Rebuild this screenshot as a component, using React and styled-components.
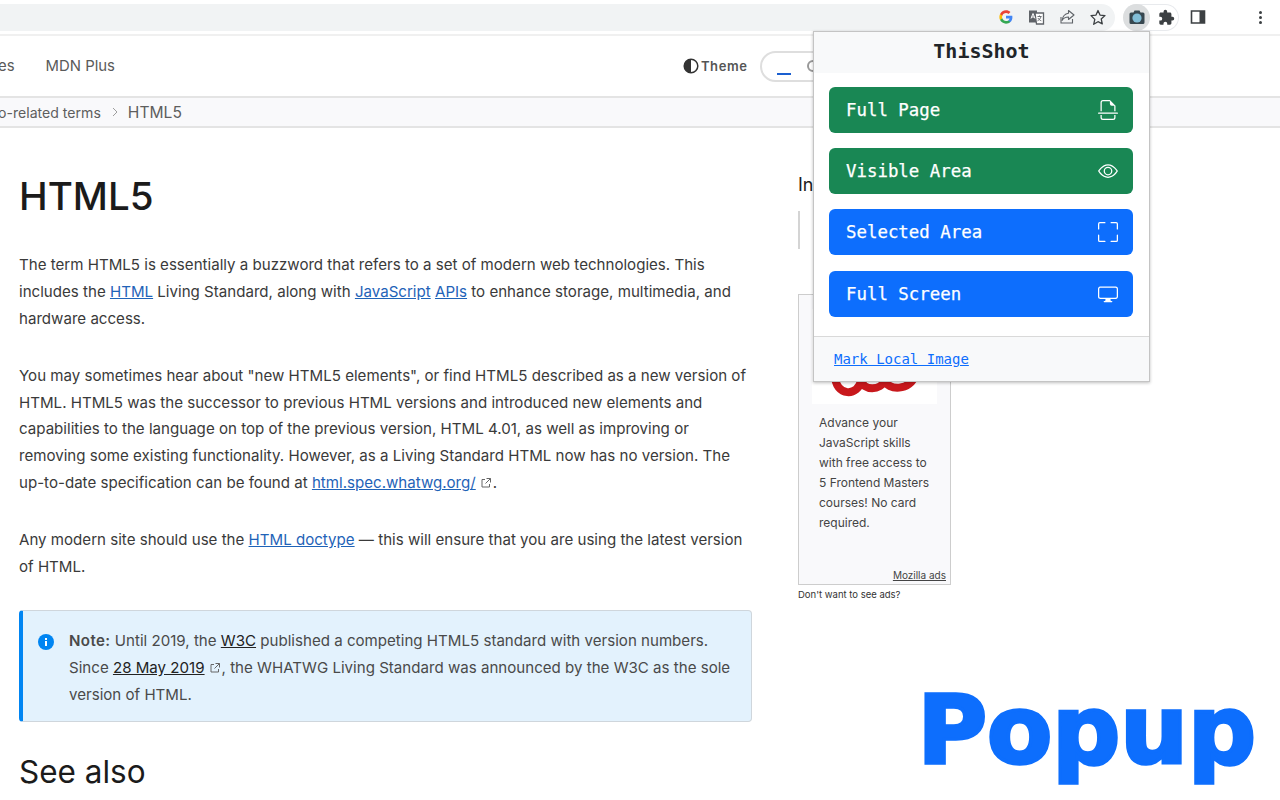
import React from 'react';
import styled, { createGlobalStyle } from 'styled-components';
import { BsFileEarmarkBreak, BsEye, BsFullscreen, BsDisplay } from 'react-icons/bs';

const GlobalStyle = createGlobalStyle`
   html, body {
      margin: 0;
      padding: 0;
      background: #fff;
   }
   * {
      box-sizing: border-box;
   }
`;

const ExternalIcon = () => (
   <ExternalSvg viewBox='0 0 12 12'>
      <path d='M5 2.5H2v7.5h7.5V7' fill='none' stroke='currentColor' strokeWidth='1' />
      <path d='M6.5 1.5h4v4M10.5 1.5L5.5 6.5' fill='none' stroke='currentColor' strokeWidth='1' />
   </ExternalSvg>
);

const App = () => {
   return (
      <Page>
         <GlobalStyle />
         <Chrome>
            <Omnibox>
               <ToolIcon viewBox='0 0 24 24' width='16' height='16'>
                  <path d='M21.6 12.2c0-.7-.1-1.4-.2-2H12v3.9h5.4c-.2 1.2-.9 2.3-2 3v2.5h3.2c1.9-1.7 3-4.3 3-7.4z' fill='#4285f4' />
                  <path d='M12 22c2.7 0 5-.9 6.6-2.4l-3.2-2.5c-.9.6-2 1-3.4 1-2.6 0-4.8-1.8-5.6-4.1H3.1v2.6C4.7 19.8 8.1 22 12 22z' fill='#34a853' />
                  <path d='M6.4 14c-.2-.6-.3-1.3-.3-2s.1-1.4.3-2V7.400H3.100C2.400 8.700 2 10.300 2 12s.4 3.300 1.100 4.600L6.400 14z' fill='#fbbc05' />
                  <path d='M12 6c1.500 0 2.800.5 3.800 1.500l2.900-2.900C17 3 14.700 2 12 2 8.100 2 4.700 4.200 3.100 7.400L6.400 10c.8-2.300 3-4 5.600-4z' fill='#ea4335' />
               </ToolIcon>
               <ToolIcon viewBox='0 0 18 18' width='18' height='18'>
                  <path d='M2 2.500h8v12H2z' fill='#5f6368' />
                  <path d='M8 5h8.500v11H9.500z' fill='#fff' stroke='#5f6368' strokeWidth='1.300' />
                  <path d='M4 10.500l2-5 2 5M4.700 9h2.600' fill='none' stroke='#fff' strokeWidth='1' />
                  <path d='M10.500 8.500h4M12.500 7.500v1M14 8.500c-.5 2-1.800 3.500-3.500 4.300M11 10c.6 1.200 1.800 2.300 3.300 2.800' fill='none' stroke='#5f6368' strokeWidth='.9' />
               </ToolIcon>
               <ToolIcon viewBox='0 0 18 18' width='18' height='18'>
                  <path d='M3 9v6h11.500v-4' fill='none' stroke='#5f6368' strokeWidth='1.100' />
                  <path d='M10.500 2.500l5.500 4.500-5.500 4.500V9C7.500 9 5.500 10 4 12.500 4.500 9 6.500 5.800 10.500 5.200z' fill='none' stroke='#5f6368' strokeWidth='1.100' strokeLinejoin='round' />
               </ToolIcon>
               <ToolIcon viewBox='0 0 18 18' width='18' height='18'>
                  <path d='M9 2.500l2 4.600 5 .5-3.800 3.300 1.100 4.900L9 13.700l-4.300 2.600 1.100-4.900L2 7.600l5-.5z' fill='none' stroke='#3c4043' strokeWidth='1.300' strokeLinejoin='round' />
               </ToolIcon>
            </Omnibox>
            <ExtensionPill>
               <CameraButton>
                  <svg viewBox='0 0 18 18' width='18' height='18'>
                     <path d='M6.500 2.500h5l1 2H15a1.500 1.500 0 0 1 1.500 1.500v8.500A1.500 1.500 0 0 1 15 16H3a1.500 1.500 0 0 1-1.500-1.500V6A1.500 1.500 0 0 1 3 4.500h2.500z' fill='#37474f' />
                     <circle cx='9' cy='10' r='4.600' fill='#81bdd6' />
                  </svg>
               </CameraButton>
               <ToolIcon viewBox='0 0 18 18' width='17' height='17'>
                  <path d='M15.300 8.300h-1.100V5.300c0-.8-.7-1.500-1.500-1.500h-3V2.700a1.900 1.900 0 0 0-3.800 0v1.100h-3c-.8 0-1.500.7-1.500 1.500v2.900h1.100a2 2 0 0 1 0 4H1.400v2.900c0 .8.7 1.500 1.500 1.500h2.900v-1.100a2 2 0 0 1 4 0v1.100h2.900c.8 0 1.500-.7 1.500-1.500v-3h1.100a1.900 1.900 0 0 0 0-3.800z' fill='#3c4043' />
               </ToolIcon>
            </ExtensionPill>
            <SideIcon viewBox='0 0 18 18' width='18' height='18'>
               <path d='M2.500 3h13v12h-13z' fill='none' stroke='#3c4043' strokeWidth='1.600' />
               <path d='M10.500 3h5v12h-5z' fill='#3c4043' />
            </SideIcon>
            <MenuDots>
               <i />
               <i />
               <i />
            </MenuDots>
         </Chrome>

         <Nav>
            <NavLink>es</NavLink>
            <NavLink>MDN Plus</NavLink>
            <ThemeButton>
               <svg viewBox='0 0 16 16' width='16' height='16'>
                  <circle cx='8' cy='8' r='6.800' fill='#fff' stroke='#333' strokeWidth='1.500' />
                  <path d='M8 1.200a6.800 6.800 0 0 0 0 13.600z' fill='#333' />
               </svg>
               Theme
            </ThemeButton>
            <SearchPill>
               <SearchCaret />
               <SearchGlass />
            </SearchPill>
         </Nav>

         <Breadcrumbs>
            <Crumb $size='14.1px'>o-related terms</Crumb>
            <CrumbArrow viewBox='0 0 8 10' width='8' height='10'>
               <path d='M2 1l4 4-4 4' fill='none' stroke='#9e9e9e' strokeWidth='1' />
            </CrumbArrow>
            <Crumb $size='15.6px'>HTML5</Crumb>
         </Breadcrumbs>

         <Main>
            <Article>
               <Title>HTML5</Title>
               <Paragraph>
                  The term HTML5 is essentially a buzzword that refers to a set of modern web technologies. This includes the <TextLink>HTML</TextLink> Living Standard, along with <TextLink>JavaScript</TextLink> <TextLink>APIs</TextLink> to enhance storage, multimedia, and hardware access.
               </Paragraph>
               <Paragraph>
                  You may sometimes hear about "new HTML5 elements", or find HTML5 described as a new version of HTML. HTML5 was the successor to previous HTML versions and introduced new elements and capabilities to the language on top of the previous version, HTML 4.01, as well as improving or removing some existing functionality. However, as a Living Standard HTML now has no version. The up-to-date specification can be found at <TextLink>html.spec.whatwg.org/</TextLink><ExternalIcon />.
               </Paragraph>
               <Paragraph>
                  Any modern site should use the <TextLink>HTML doctype</TextLink> — this will ensure that you are using the latest version of HTML.
               </Paragraph>
               <Note>
                  <NoteIcon viewBox='0 0 16 16' width='16' height='16'>
                     <circle cx='8' cy='8' r='8' fill='#0085f2' />
                     <rect x='7' y='7' width='2' height='5' fill='#fff' />
                     <rect x='7' y='4' width='2' height='2' fill='#fff' />
                  </NoteIcon>
                  <NoteText>
                     <strong>Note:</strong> Until 2019, the <NoteLink>W3C</NoteLink> published a competing HTML5 standard with version numbers. Since <NoteLink>28 May 2019</NoteLink><ExternalIcon />, the WHATWG Living Standard was announced by the W3C as the sole version of HTML.
                  </NoteText>
               </Note>
               <Subtitle>See also</Subtitle>
            </Article>

            <Sidebar>
               <TocHeading>In</TocHeading>
               <TocRail />
               <AdBox>
                  <AdImage>
                     <svg viewBox='0 0 90 22' width='90' height='22'>
                        <path d='M5 0c0 22 24 22 26 5c2 11 20 11 24 0c2 11 26 11 30-5' fill='none' stroke='#c8181c' strokeWidth='8' />
                     </svg>
                  </AdImage>
                  <AdText>Advance your JavaScript skills with free access to 5 Frontend Masters courses! No card required.</AdText>
                  <AdCredit>Mozilla ads</AdCredit>
               </AdBox>
               <AdNote>Don't want to see ads?</AdNote>
            </Sidebar>
         </Main>

         <Popup>
            <PopupHeader>ThisShot</PopupHeader>
            <PopupBody>
               <ShotButton $color='#198754'>
                  Full Page
                  <BsFileEarmarkBreak size={20} />
               </ShotButton>
               <ShotButton $color='#198754'>
                  Visible Area
                  <BsEye size={20} />
               </ShotButton>
               <ShotButton $color='#0d6efd'>
                  Selected Area
                  <BsFullscreen size={20} />
               </ShotButton>
               <ShotButton $color='#0d6efd'>
                  Full Screen
                  <BsDisplay size={20} />
               </ShotButton>
            </PopupBody>
            <PopupFooter>
               <FooterLink>Mark Local Image</FooterLink>
            </PopupFooter>
         </Popup>

         <Caption>Popup</Caption>
      </Page>
   );
};

export default App;


const Page = styled.div`
   position: relative;
   width: 1280px;
   height: 800px;
   overflow: hidden;
   background: #fff;
   font-family: Inter, 'Liberation Sans', sans-serif;
   color: #333;
`;

const Chrome = styled.div`
   display: flex;
   align-items: center;
   height: 36px;
   padding-top: 4px;
   padding-bottom: 4px;
   border-bottom: 2px solid #f0f0f0;
`;

const Omnibox = styled.div`
   display: flex;
   align-items: center;
   justify-content: flex-end;
   gap: 13px;
   width: 1115px;
   height: 27px;
   padding-right: 8px;
   background: #f1f3f4;
   border-radius: 0 14px 14px 0;
`;

const ToolIcon = styled.svg`
   display: block;
   flex: none;
`;

const ExtensionPill = styled.div`
   display: flex;
   align-items: center;
   gap: 8px;
   width: 56px;
   height: 27px;
   margin-left: 8px;
   border: 1px solid #e8eaed;
   border-left: none;
   border-radius: 14px;
`;

const CameraButton = styled.div`
   display: flex;
   align-items: center;
   justify-content: center;
   width: 27px;
   height: 27px;
   border-radius: 50%;
   background: #dcdedf;
`;

const SideIcon = styled.svg`
   display: block;
   flex: none;
   margin-left: 10px;
`;

const MenuDots = styled.div`
   display: flex;
   flex-direction: column;
   gap: 2px;
   margin-left: 52px;

   i {
      display: block;
      width: 3px;
      height: 3px;
      border-radius: 50%;
      background: #3c4043;
   }
`;

const Nav = styled.nav`
   display: flex;
   align-items: center;
   height: 62px;
   border-bottom: 2px solid #e4e4e4;
`;

const NavLink = styled.span`
   font-size: 14.9px;
   color: #5a5a5a;
   margin-left: 31px;

   &:first-child {
      margin-left: -2px;
   }
`;

const ThemeButton = styled.div`
   display: flex;
   align-items: center;
   gap: 2px;
   margin-left: 568px;
   font-size: 13px;
   font-weight: 600;
   letter-spacing: 0.6px;
   color: #555;
`;

const SearchPill = styled.div`
   position: relative;
   width: 100px;
   height: 31px;
   margin-top: 1px;
   margin-left: 12px;
   border: 2px solid #dedede;
   border-radius: 16px;
`;

const SearchCaret = styled.div`
   position: absolute;
   left: 15px;
   top: 20px;
   width: 14px;
   height: 2px;
   background: #1a5fd0;
`;

const SearchGlass = styled.div`
   position: absolute;
   left: 45px;
   top: 7px;
   width: 12px;
   height: 12px;
   border: 2px solid #999;
   border-radius: 50%;
`;

const Breadcrumbs = styled.div`
   display: flex;
   align-items: center;
   gap: 9px;
   height: 30px;
   background: #f9f9fb;
   border-bottom: 2px solid #e4e4e4;
`;

const Crumb = styled.span`
   font-size: ${(props) => props.$size};
   color: #5e5e5e;

   &:first-child {
      margin-left: -2px;
   }
`;

const CrumbArrow = styled.svg`
   display: block;
   margin-left: 1px;
`;

const Main = styled.main`
   display: flex;
   align-items: flex-start;
   gap: 46px;
   padding-left: 19px;
`;

const Article = styled.article`
   flex: none;
   width: 733px;
   padding-top: 44px;
`;

const Title = styled.h1`
   margin: 0 0 32px;
   font-size: 38.5px;
   line-height: 48px;
   font-weight: 500;
   color: #1b1b1b;
`;

const Paragraph = styled.p`
   margin: 0 0 30.4px;
   font-size: 15.1px;
   line-height: 26.8px;
   color: #3a3a3a;
`;

const TextLink = styled.a`
   color: #1f63b8;
   text-decoration: underline;
`;

const ExternalSvg = styled.svg`
   display: inline-block;
   width: 12px;
   height: 12px;
   margin-left: 4px;
   margin-right: 1px;
   vertical-align: -1px;
   color: #666;
`;

const Note = styled.div`
   display: flex;
   gap: 15px;
   height: 112px;
   margin-top: -1px;
   padding: 17px 16px 0 15px;
   background: #e3f2fd;
   border: 1px solid #cfd6dc;
   border-left: 4px solid #0085f2;
   border-radius: 4px;
`;

const NoteIcon = styled.svg`
   display: block;
   flex: none;
   margin-top: 6px;
`;

const NoteText = styled.div`
   font-size: 15.1px;
   line-height: 26.8px;
   color: #4a4a4a;

   strong {
      font-weight: 600;
      letter-spacing: 0.4px;
   }
`;

const NoteLink = styled.a`
   color: #222;
   text-decoration: underline;
`;

const Subtitle = styled.h2`
   margin: 30px 0 0;
   font-size: 31.5px;
   line-height: 40px;
   font-weight: 400;
   color: #1b1b1b;
`;

const Sidebar = styled.aside`
   flex: none;
   width: 160px;
   padding-top: 44px;
`;

const TocHeading = styled.div`
   font-size: 18px;
   line-height: 26px;
   color: #1b1b1b;
`;

const TocRail = styled.div`
   width: 2px;
   height: 38px;
   margin-top: 13px;
   background: #d4d4d4;
`;

const AdBox = styled.div`
   display: flex;
   flex-direction: column;
   width: 153px;
   height: 291px;
   margin-top: 45px;
   padding: 14px 13px 3px;
   background: #f9f9fb;
   border: 1px solid #cdcdcd;
`;

const AdImage = styled.div`
   display: flex;
   align-items: flex-end;
   justify-content: center;
   height: 95px;
   padding-bottom: 7px;
   background: #fff;
`;

const AdText = styled.div`
   width: 114px;
   margin: 9px 0 0 7px;
   font-size: 12px;
   line-height: 20px;
   color: #444;
`;

const AdCredit = styled.div`
   margin-top: auto;
   margin-right: -9px;
   text-align: right;
   font-size: 10px;
   color: #444;
   text-decoration: underline;
`;

const AdNote = styled.div`
   margin-top: 4px;
   font-size: 9.500px;
   line-height: 12px;
   color: #333;
`;

const Popup = styled.div`
   position: absolute;
   left: 813px;
   top: 31px;
   display: flex;
   flex-direction: column;
   width: 337px;
   height: 351px;
   background: #fff;
   border: 1px solid #c4c4c4;
   box-shadow: 0 1px 3px rgba(0, 0, 0, 0.25);
   font-family: 'DejaVu Sans Mono', 'Liberation Mono', monospace;
`;

const PopupHeader = styled.div`
   display: flex;
   align-items: center;
   justify-content: center;
   height: 41px;
   padding-bottom: 3px;
   background: #f8f9fa;
   font-size: 20px;
   font-weight: 700;
   color: #212529;
`;

const PopupBody = styled.div`
   display: flex;
   flex-direction: column;
   gap: 15.2px;
   flex: 1;
   padding: 14px 16px 0 15px;
`;

const ShotButton = styled.div`
   display: flex;
   align-items: center;
   justify-content: space-between;
   height: 46px;
   padding: 0 15px 0 17px;
   background: ${(props) => props.$color};
   color: #fff;
   border-radius: 6px;
   font-size: 17.4px;
   -webkit-text-stroke: 0.25px #fff;
`;

const PopupFooter = styled.div`
   display: flex;
   align-items: center;
   height: 45px;
   padding-left: 20px;
   background: #f8f9fa;
   border-top: 1px solid #d9d9d9;
`;

const FooterLink = styled.a`
   font-size: 14px;
   color: #0d6efd;
   text-decoration: underline;
`;

const Caption = styled.div`
   position: absolute;
   right: 24px;
   bottom: 7px;
   font-family: 'DejaVu Sans', Verdana, sans-serif;
   font-size: 95px;
   line-height: 125px;
   font-weight: 700;
   color: #0d6efd;
   -webkit-text-stroke: 3.5px #0d6efd;
`;
